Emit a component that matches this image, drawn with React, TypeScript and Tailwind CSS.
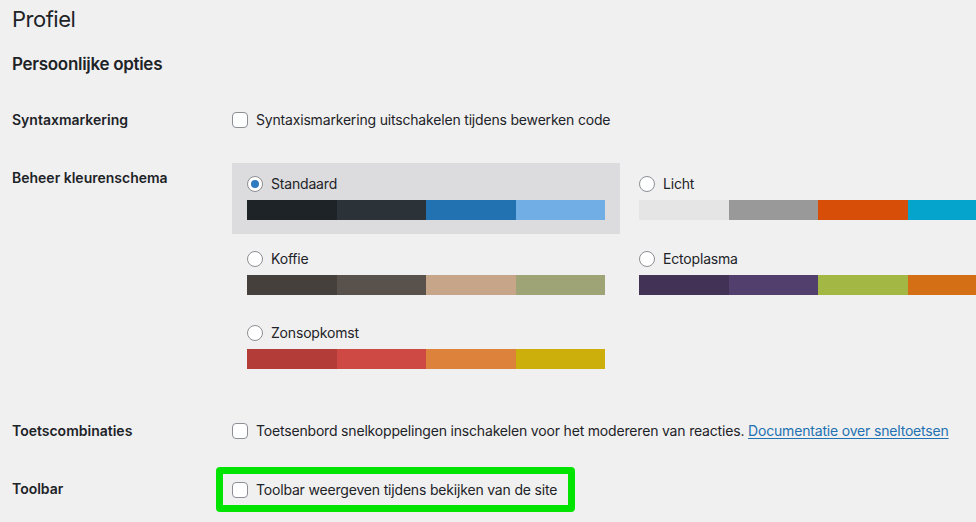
const schemes = [
  { name: "Standaard", colors: ["#1d2327", "#2c3338", "#2271b1", "#72aee6"], checked: true },
  { name: "Licht", colors: ["#e5e5e5", "#999999", "#d64e07", "#04a4cc"] },
  { name: "Koffie", colors: ["#46403c", "#59524c", "#c7a589", "#9ea476"] },
  { name: "Ectoplasma", colors: ["#413256", "#523f6d", "#a3b745", "#d46f15"] },
  { name: "Zonsopkomst", colors: ["#b43c38", "#cf4944", "#dd823b", "#ccaf0b"] },
];

function Checkbox() {
  return (
    <span className="w-4 h-4 shrink-0 rounded-[4px] border border-[#8c8f94] bg-white" />
  );
}

function Radio({ checked }: { checked?: boolean }) {
  return (
    <span className="w-4 h-4 shrink-0 rounded-full border border-[#8c8f94] bg-white flex items-center justify-center">
      {checked && <span className="w-2 h-2 rounded-full bg-[#2f7bc0]" />}
    </span>
  );
}

function SchemeOption({ name, colors, checked }: { name: string; colors: string[]; checked?: boolean }) {
  return (
    <div className={`w-[388px] h-[71px] pt-[11px] px-[15px] ${checked ? "bg-[#dcdcde]" : ""}`}>
      <div className="flex items-center gap-2 h-5">
        <Radio checked={checked} />
        <span>{name}</span>
      </div>
      <div className="flex mt-[6px] h-5 w-[358px]">
        {colors.map((c) => (
          <span key={c} className="flex-1" style={{ background: c }} />
        ))}
      </div>
    </div>
  );
}

export default function App() {
  const left = [schemes[0], schemes[2], schemes[4]];
  const right = [schemes[1], schemes[3]];

  return (
    <div className="w-[976px] h-[522px] overflow-hidden bg-[#f0f0f1] text-[#1d2327] text-[14px] leading-5 tracking-[-0.18px] px-3 font-['Inter','Noto_Sans',sans-serif]">
      <h1 className="pt-[5px] text-[22px] leading-[29px] font-normal tracking-[-0.5px]">Profiel</h1>
      <h2 className="mt-[19px] text-[17px] leading-[23px] font-semibold tracking-[-0.3px]">Persoonlijke opties</h2>

      <div className="grid grid-cols-[220px_1fr] mt-[34px]">
        <div className="font-semibold tracking-normal">Syntaxmarkering</div>
        <label className="flex items-center gap-2 h-5">
          <Checkbox />
          <span>Syntaxismarkering uitschakelen tijdens bewerken code</span>
        </label>
      </div>

      <div className="grid grid-cols-[220px_1fr] mt-[33px]">
        <div className="font-semibold tracking-normal pt-[5px]">Beheer kleurenschema</div>
        <div className="flex gap-x-[4px] w-[900px]">
          <div className="flex flex-col gap-y-[3.5px]">
            {left.map((s) => (
              <SchemeOption key={s.name} {...s} />
            ))}
          </div>
          <div className="flex flex-col gap-y-[3.5px]">
            {right.map((s) => (
              <SchemeOption key={s.name} {...s} />
            ))}
          </div>
        </div>
      </div>

      <div className="grid grid-cols-[220px_1fr] mt-[38px]">
        <div className="font-semibold tracking-normal">Toetscombinaties</div>
        <label className="flex items-center gap-2 h-5 whitespace-nowrap">
          <Checkbox />
          <span>
            Toetsenbord snelkoppelingen inschakelen voor het modereren van reacties.{" "}
            <a href="#" className="text-[#2271b1] underline underline-offset-2">
              Documentatie over sneltoetsen
            </a>
          </span>
        </label>
      </div>

      <div className="grid grid-cols-[220px_1fr] mt-[26px]">
        <div className="font-semibold tracking-normal pt-[12px]">Toolbar</div>
        <div className="-ml-4">
          <label className="flex items-center gap-2 w-[359px] h-[45px] border-[7px] border-[#00e400] rounded-[4px] pl-[9px]">
            <Checkbox />
            <span>Toolbar weergeven tijdens bekijken van de site</span>
          </label>
        </div>
      </div>
    </div>
  );
}
